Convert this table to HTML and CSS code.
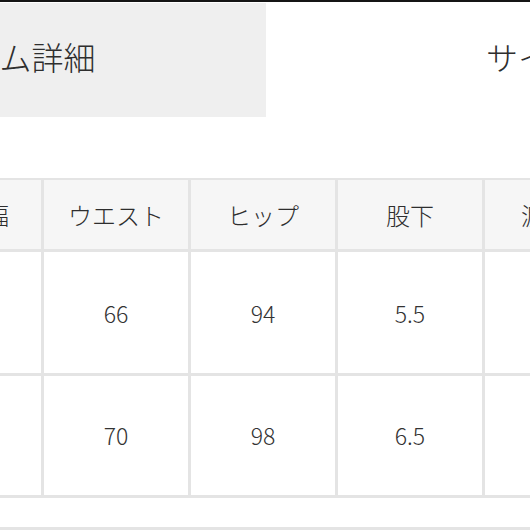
FILE: index.html
```html
<!DOCTYPE html>
<html lang="ja">
<head>
<meta charset="utf-8">
<link rel="stylesheet" href="styles.css">
</head>
<body>
<div class="topbar"></div>
<div class="tabs">
  <div class="tab tab-active"><span>アイテム詳細</span></div>
  <div class="tab tab-other"><span>サイズ表</span></div>
</div>
<div class="table">
  <div class="cell head head-first">ベルト幅</div>
  <div class="cell head">ウエスト</div>
  <div class="cell head">ヒップ</div>
  <div class="cell head">股下</div>
  <div class="cell head">渡り幅</div>

  <div class="cell row1">4</div>
  <div class="cell row1">66</div>
  <div class="cell row1">94</div>
  <div class="cell row1">5.5</div>
  <div class="cell row1">30</div>

  <div class="cell row2">4</div>
  <div class="cell row2">70</div>
  <div class="cell row2">98</div>
  <div class="cell row2">6.5</div>
  <div class="cell row2">31</div>
</div>
<div class="footer"></div>
</body>
</html>
```
FILE: styles.css
```css
html, body {
  margin: 0;
  padding: 0;
  overflow: hidden;
  background: #ffffff;
  width: 530px;
  height: 530px;
}
body {
  font-family: "Noto Sans CJK JP", "Noto Sans", sans-serif;
  font-weight: 300;
  color: #333333;
}
.topbar {
  height: 2px;
  background: #151515;
}
.tabs {
  display: flex;
  margin-top: 1px;
  margin-left: -264px;
  height: 114px;
  width: 1100px;
}
.tab {
  display: flex;
  align-items: center;
  font-size: 32px;
  line-height: 1;
  padding-bottom: 8px;
  box-sizing: border-box;
  color: #2e2e2e;
}
.tab-active {
  width: 530px;
  justify-content: center;
  background: #efefef;
}
.tab-other {
  width: 560px;
  padding-left: 220px;
  background: #ffffff;
}
.table {
  margin-top: 61px;
  margin-left: -103px;
  width: 732px;
  display: grid;
  grid-template-columns: repeat(5, 144px);
  grid-template-rows: 69px 121px 119px;
  gap: 3px;
  padding-top: 2px;
  padding-bottom: 3px;
  background: #e4e4e4;
}
.cell {
  display: flex;
  align-items: center;
  justify-content: center;
  background: #ffffff;
  color: #333333;
  line-height: 1;
}
.head {
  background: #f6f6f6;
  font-size: 24px;
  color: #2e2e2e;
}
.head-first {
  padding-right: 16px;
}
.row1, .row2 {
  font-size: 23px;
  color: #333333;
}
.row1 {
  padding-top: 2px;
}
.footer {
  height: 29px;
  border-bottom: 3px solid #e4e4e4;
  background: #ffffff;
}
```
